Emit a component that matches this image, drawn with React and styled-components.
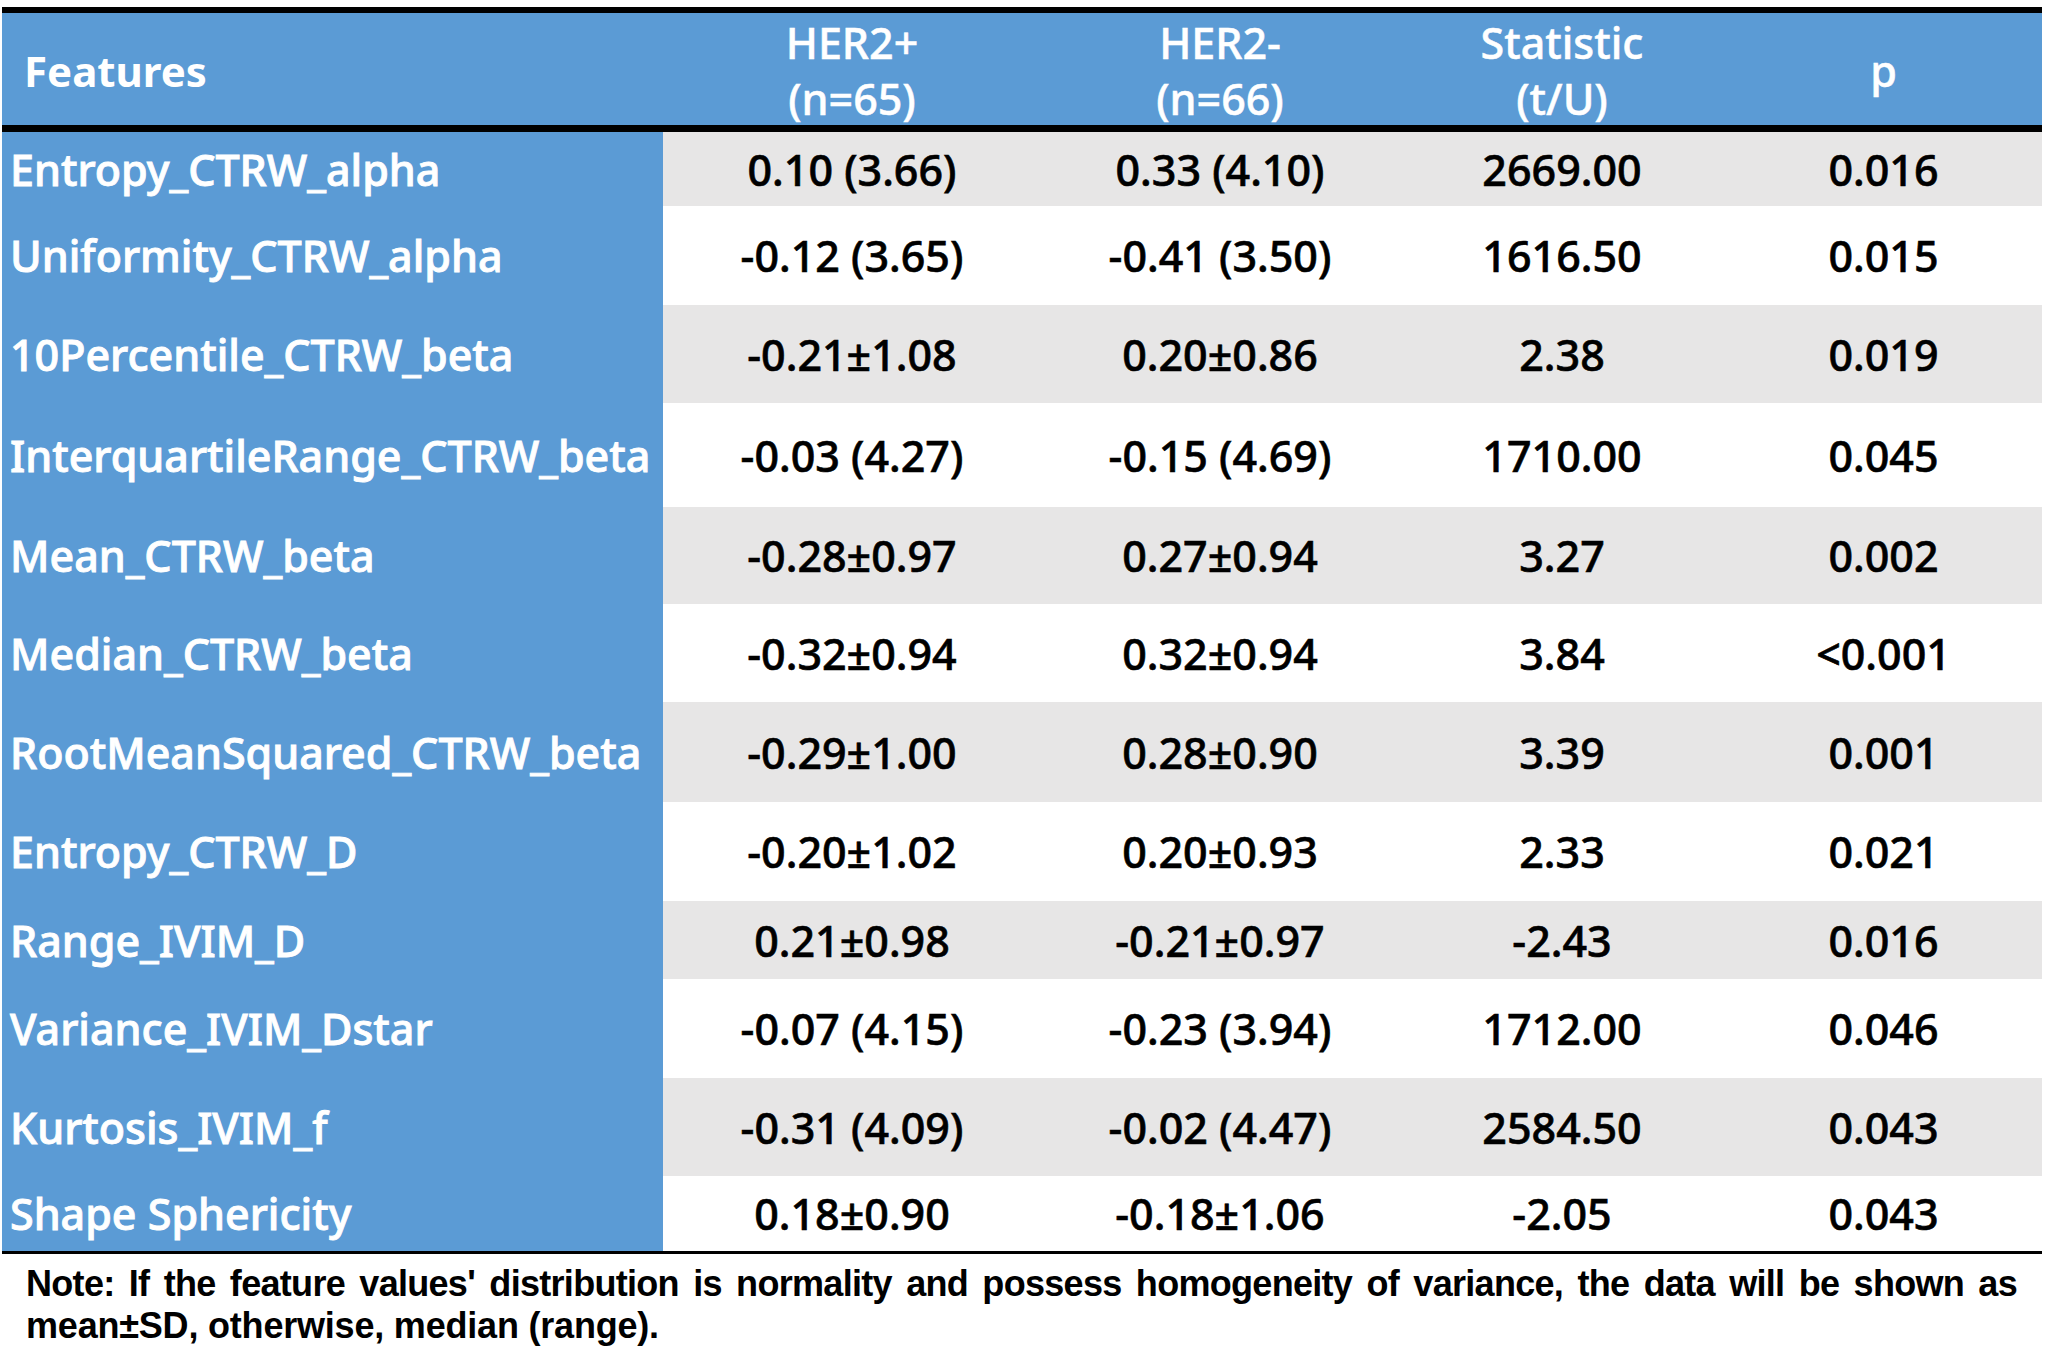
import styled, { createGlobalStyle } from "styled-components";

const GlobalStyle = createGlobalStyle`
  html, body {
    margin: 0;
    padding: 0;
    background: #ffffff;
  }
  body {
    font-family: "Noto Sans", "Noto Sans CJK SC", sans-serif;
  }
`;

const rows = [
  { name: "Entropy_CTRW_alpha", pos: "0.10 (3.66)", neg: "0.33 (4.10)", stat: "2669.00", p: "0.016", h: 74 },
  { name: "Uniformity_CTRW_alpha", pos: "-0.12 (3.65)", neg: "-0.41 (3.50)", stat: "1616.50", p: "0.015", h: 99 },
  { name: "10Percentile_CTRW_beta", pos: "-0.21±1.08", neg: "0.20±0.86", stat: "2.38", p: "0.019", h: 98 },
  { name: "InterquartileRange_CTRW_beta", pos: "-0.03 (4.27)", neg: "-0.15 (4.69)", stat: "1710.00", p: "0.045", h: 104 },
  { name: "Mean_CTRW_beta", pos: "-0.28±0.97", neg: "0.27±0.94", stat: "3.27", p: "0.002", h: 97 },
  { name: "Median_CTRW_beta", pos: "-0.32±0.94", neg: "0.32±0.94", stat: "3.84", p: "<0.001", h: 98 },
  { name: "RootMeanSquared_CTRW_beta", pos: "-0.29±1.00", neg: "0.28±0.90", stat: "3.39", p: "0.001", h: 100 },
  { name: "Entropy_CTRW_D", pos: "-0.20±1.02", neg: "0.20±0.93", stat: "2.33", p: "0.021", h: 99 },
  { name: "Range_IVIM_D", pos: "0.21±0.98", neg: "-0.21±0.97", stat: "-2.43", p: "0.016", h: 78 },
  { name: "Variance_IVIM_Dstar", pos: "-0.07 (4.15)", neg: "-0.23 (3.94)", stat: "1712.00", p: "0.046", h: 99 },
  { name: "Kurtosis_IVIM_f", pos: "-0.31 (4.09)", neg: "-0.02 (4.47)", stat: "2584.50", p: "0.043", h: 98 },
  { name: "Shape Sphericity", pos: "0.18±0.90", neg: "-0.18±1.06", stat: "-2.05", p: "0.043", h: 75 },
];

const App = () => {
  return (
    <Page>
      <GlobalStyle />
      <Table>
        <HeadRow>
          <HeadCell $left>Features</HeadCell>
          <HeadCell>HER2+<br />(n=65)</HeadCell>
          <HeadCell>HER2-<br />(n=66)</HeadCell>
          <HeadCell>Statistic<br />(t/U)</HeadCell>
          <HeadCell>p</HeadCell>
        </HeadRow>
        {rows.map((r, i) => (
          <Row key={r.name} $h={r.h}>
            <NameCell>{r.name}</NameCell>
            <Cell $shade={i % 2 === 0}>{r.pos}</Cell>
            <Cell $shade={i % 2 === 0}>{r.neg}</Cell>
            <Cell $shade={i % 2 === 0}>{r.stat}</Cell>
            <Cell $shade={i % 2 === 0}>{r.p}</Cell>
          </Row>
        ))}
      </Table>
      <Note>
        <NoteLine $justify>
          Note: If the feature values' distribution is normality and possess homogeneity of variance, the data will be shown as
        </NoteLine>
        <NoteLine>mean±SD, otherwise, median (range).</NoteLine>
      </Note>
    </Page>
  );
};

export default App;

const Page = styled.div`
  width: 2046px;
  padding-top: 7px;
`;

const Table = styled.div`
  margin-left: 2px;
  width: 2040px;
  border-top: 6px solid #000;
  border-bottom: 3px solid #000;
`;

const cols = "661px 378px 358px 326px 317px";

const HeadRow = styled.div`
  display: grid;
  grid-template-columns: ${cols};
  height: 112px;
  background: #5b9bd5;
  border-bottom: 7px solid #000;
  color: #fff;
`;

const HeadCell = styled.div`
  display: flex;
  align-items: center;
  justify-content: ${(p) => (p.$left ? "flex-start" : "center")};
  text-align: center;
  padding-left: ${(p) => (p.$left ? "22px" : "0")};
  padding-top: 2px;
  font-size: ${(p) => (p.$left ? "42px" : "43px")};
  font-weight: ${(p) => (p.$left ? 700 : 500)};
  line-height: 56px;
  white-space: nowrap;
  -webkit-text-stroke: ${(p) => (p.$left ? "0" : "0.5px #fff")};
`;

const Row = styled.div`
  display: grid;
  grid-template-columns: ${cols};
  height: ${(p) => p.$h}px;
`;

const NameCell = styled.div`
  display: flex;
  align-items: center;
  background: #5b9bd5;
  color: #fff;
  padding-left: 8px;
  font-size: 43px;
  font-weight: 500;
  white-space: nowrap;
  -webkit-text-stroke: 0.9px #fff;
`;

const Cell = styled.div`
  display: flex;
  align-items: center;
  justify-content: center;
  background: ${(p) => (p.$shade ? "#e7e6e6" : "#ffffff")};
  color: #000;
  font-size: 43px;
  font-weight: 500;
  white-space: nowrap;
  -webkit-text-stroke: 0.6px #000;
`;

const Note = styled.div`
  padding: 9px 29px 0 26px;
  font-family: "Liberation Sans", Arial, sans-serif;
  font-weight: 700;
  font-size: 36px;
  line-height: 42px;
  color: #000;
`;

const NoteLine = styled.div`
  letter-spacing: ${(p) => (p.$justify ? "-0.7px" : "-0.2px")};
  text-align: ${(p) => (p.$justify ? "justify" : "left")};
  text-align-last: ${(p) => (p.$justify ? "justify" : "left")};
  white-space: ${(p) => (p.$justify ? "normal" : "nowrap")};
`;
